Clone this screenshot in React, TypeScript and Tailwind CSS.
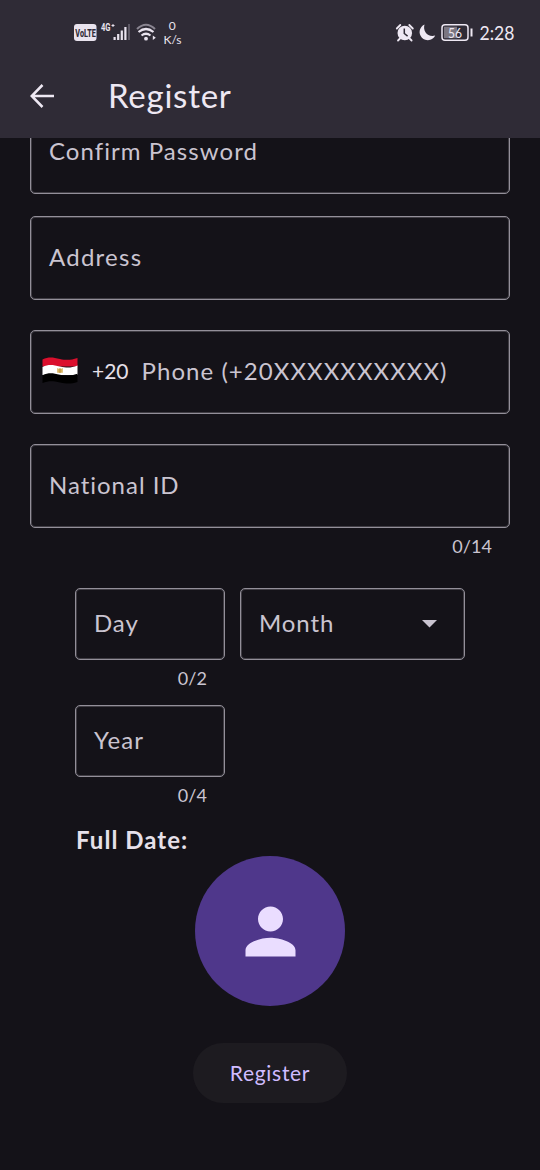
import React from "react";

function StatusBar() {
  return (
    <div className="flex h-[68px] w-full items-center text-[#eee8f3]">
      <svg className="ml-[60px] h-[50px] w-[140px] shrink-0" viewBox="60 10 140 50" fill="none">
        <rect x="74" y="25" width="22.500" height="17" rx="3" fill="#e9e3ee" />
        <text transform="translate(75.300 37.500) scale(.66 1)" fontSize="11" fontWeight="800" fontFamily="Roboto, sans-serif" fill="#2f2b36">VoLTE</text>
        <text transform="translate(101 32) scale(.76 1)" fontSize="10" fontWeight="700" fontFamily="Roboto, sans-serif" fill="#e9e3ee">4G</text>
        <path d="M111.500 26.500h3M113 25v3" stroke="#e9e3ee" strokeWidth="1" />
        <path d="M114.600 38v3M118.200 35v6M121.800 31.500v9.500M125.400 28v13" stroke="#e9e3ee" strokeWidth="2.200" />
        <path d="M129 25v16" stroke="#5e5966" strokeWidth="2" />
        <path d="M137 30q9 -8.500 18 0" stroke="#8a8591" strokeWidth="2" />
        <path d="M138.500 33q7.500 -6 15 0M141.500 36.500q4.500 -3.500 9 0" stroke="#e9e3ee" strokeWidth="2.200" />
        <circle cx="146" cy="39.700" r="1.900" fill="#e9e3ee" />
        <path d="M152.800 36.500l3 2.300l-3 2.300z" fill="#e9e3ee" />
        <text x="172.200" y="31" textAnchor="middle" fontSize="12" fontFamily="Lato, sans-serif" fill="#e9e3ee">0</text>
        <text x="163.500" y="45" textLength="18" fontSize="12" fontFamily="Lato, sans-serif" fill="#e9e3ee">K/s</text>
      </svg>
      <svg className="ml-[180px] h-[50px] w-[150px] shrink-0" viewBox="380 10 150 50" fill="none">
        <circle cx="404.800" cy="34" r="7.300" fill="#eee8f3" />
        <path d="M396.800 29.500l3.500 -3.500M412.800 29.500l-3.500 -3.500M400 39.500l-2 2M409.600 39.500l2 2" stroke="#eee8f3" strokeWidth="1.800" strokeLinecap="round" />
        <path d="M404.300 29.500v5l3.300 2.600" stroke="#2f2b36" strokeWidth="1.500" />
        <path d="M424.500 25.500A8.200 8.200 0 1 0 435.200 36.500C428 38.500 422.500 32.500 424.500 25.500Z" fill="#eee8f3" />
        <rect x="442" y="25.700" width="26" height="15.500" rx="3" stroke="#eee8f3" strokeWidth="1.500" />
        <rect x="444" y="27.700" width="13" height="11.500" fill="#7b7681" />
        <path d="M471.500 29.500v8" stroke="#eee8f3" strokeWidth="2" />
        <text x="448" y="38.500" textLength="14" lengthAdjust="spacingAndGlyphs" fontSize="13" fontFamily="Lato, sans-serif" fill="#eee8f3">56</text>
        <text x="479.500" y="41" textLength="35" lengthAdjust="spacingAndGlyphs" fontSize="20" fontFamily="Lato, sans-serif" fill="#eee8f3">2:28</text>
      </svg>
    </div>
  );
}

function EgyptFlag() {
  return (
    <svg className="h-[28px] w-[36px] shrink-0" viewBox="0 0 36 28">
      <path d="M.5 2.500C7 -.5 11 .5 18 2S29 3 35.500 1V9.500H.5Z" fill="#db0f2d" />
      <path d="M.5 10C7 7 11 8 18 9.500S29 11 35.500 8.500V18H.5Z" fill="#fff" />
      <path d="M.5 18.300C7 15.300 11 16.300 18 17.800S29 19 35.500 16.800V25C29 27 25 27 18 25.500S7 23.500 .5 26Z" fill="#000" />
      <path d="M15.200 11l2 1h1.600l2-1v4.700h-5.600z" fill="#d9b561" />
      <path d="M18 11v5" stroke="#b58c33" strokeWidth="1" />
    </svg>
  );
}

function Field({ className, padding = "pl-[18px]", children }: { className: string; padding?: string; children: React.ReactNode }) {
  return (
    <div className={`flex shrink-0 items-center rounded-[5px] border border-[#938f99] pb-[3px] text-2xl leading-none whitespace-nowrap text-[#cac4d0] shadow-[inset_0_0_0_1px_rgba(147,143,153,0.35)] ${padding} ${className}`}>
      {children}
    </div>
  );
}

function Counter({ children }: { children: React.ReactNode }) {
  return <div className="flex h-[36px] items-center justify-end pr-[18px] pb-px text-[18px] leading-none tracking-[0.1px] text-[#cac4d0]">{children}</div>;
}

export default function App() {
  return (
    <div className="flex h-[1170px] w-[540px] flex-col overflow-hidden bg-[#141218] font-['Lato',sans-serif]">
      <header className="h-[138px] shrink-0 bg-[#2f2b36]">
        <StatusBar />
        <div className="flex h-[56px] items-center pl-[30px] text-[#eee8f3]">
          <svg className="h-6 w-[25px]" viewBox="0 0 25 24" fill="none" stroke="currentColor" strokeWidth="2.500">
            <path d="M24 12H2M12.500 1L1.700 12l10.800 11" />
          </svg>
          <h1 className="ml-[53px] pb-[2px] text-[33px] leading-none tracking-[0.75px]">Register</h1>
        </div>
      </header>
      <main className="flex min-h-0 flex-1 flex-col overflow-hidden px-[30px]">
        <Field className="-mt-[28px] h-[84px]"><span className="tracking-[1.05px]">Confirm Password</span></Field>
        <Field className="mt-[22px] h-[84px]"><span className="tracking-[1.25px]">Address</span></Field>
        <Field className="mt-[30px] h-[84px]" padding="pl-[11px]">
          <EgyptFlag />
          <span className="ml-[14px] text-[21px] text-[#e6e0e9]">+20</span>
          <span className="ml-[13px] tracking-[1.05px]">Phone (+20XXXXXXXXXX)</span>
        </Field>
        <Field className="mt-[30px] h-[84px]"><span className="tracking-[0.98px]">National ID</span></Field>
        <Counter>0/14</Counter>
        <div className="mt-6 flex gap-[15px] px-[45px]">
          <div className="w-[150px]">
            <Field className="h-[72px]"><span className="tracking-[0.9px]">Day</span></Field>
            <Counter>0/2</Counter>
          </div>
          <Field className="h-[72px] w-[225px] justify-between pr-[27px]">
            <span className="tracking-[0.9px]">Month</span>
            <svg className="mt-[3px] h-[8px] w-[15px]" viewBox="0 0 15 8"><path d="M0 0H15L7.500 7.500Z" fill="#cac4d0" /></svg>
          </Field>
        </div>
        <div className="mt-[9px] ml-[45px] w-[150px]">
          <Field className="h-[72px]"><span className="tracking-[1.1px]">Year</span></Field>
          <Counter>0/4</Counter>
        </div>
        <div className="ml-[46px] flex h-[43px] items-center pt-[10px] text-2xl leading-none font-bold text-[#e6e0e9]"><span className="tracking-[1.05px]">Full Date:</span></div>
        <div className="flex size-[150px] shrink-0 items-center justify-center self-center rounded-full bg-[#4f378b]">
          <svg className="size-[75px]" viewBox="0 0 24 24" fill="#eaddff">
            <path d="M12 12c2.210 0 4-1.790 4-4s-1.790-4-4-4-4 1.790-4 4 1.790 4 4 4zm0 2c-2.670 0-8 1.340-8 4v2h16v-2c0-2.660-5.330-4-8-4z" />
          </svg>
        </div>
        <button className="mt-[37px] flex h-[60px] w-[154px] shrink-0 items-center justify-center self-center rounded-full bg-[#1d1b20] pb-[2px] text-[21px] leading-none text-[#d0bcff]"><span className="tracking-[0.7px]">Register</span></button>
      </main>
    </div>
  );
}
